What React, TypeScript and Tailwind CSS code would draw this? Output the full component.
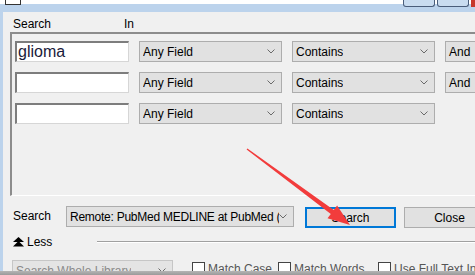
import React from "react";

function Chevron() {
  return (
    <svg width="8" height="5" viewBox="0 0 8 5" className="shrink-0">
      <path d="M0.5 0.5 L4 4 L7.5 0.5" stroke="#6a6a6a" strokeWidth="1" fill="none" />
    </svg>
  );
}

function Select({ label, w, disabled, tight }: { label: string; w: string; disabled?: boolean; tight?: boolean }) {
  return (
    <div
      className={`${w} h-[21px] shrink-0 flex items-center justify-between pl-[3px] pr-[6px] border ${
        disabled ? "bg-[#e4e4e4] border-[#c6c6c6] text-[#8a8a8a]" : "bg-[#e1e1e1] border-[#adadad] text-black"
      }`}
    >
      <span className={`leading-[14px] whitespace-nowrap overflow-hidden ${tight ? "tracking-[-0.25px]" : ""}`}>{label}</span>
      <Chevron />
    </div>
  );
}

function AndSelect() {
  return (
    <div className="w-[50px] h-[21px] shrink-0 flex items-center pl-[3px] border border-[#adadad] bg-[#e1e1e1]">
      <span className="leading-[14px]">And</span>
    </div>
  );
}

function Input({ value }: { value?: string }) {
  return (
    <div className="w-[114px] h-[21px] shrink-0 bg-white border-t-2 border-l-2 border-r border-b border-t-[#7d7d7d] border-l-[#7d7d7d] border-r-[#d6d6d6] border-b-[#d6d6d6] flex items-center pl-[1px]">
      {value && (
        <span className="font-['Liberation_Sans',Arial,sans-serif] text-[16px] leading-[18px] text-[#1a1a3a]">{value}</span>
      )}
    </div>
  );
}

function Check({ label, w }: { label: string; w: string }) {
  return (
    <div className={`${w} shrink-0 flex items-start gap-[3px]`}>
      <div className="w-[13px] h-[13px] bg-white border border-[#444] shrink-0" />
      <span className="leading-[14px] text-[#555] whitespace-nowrap">{label}</span>
    </div>
  );
}

export default function App() {
  return (
    <div className="relative w-[475px] h-[275px] overflow-hidden font-['Liberation_Sans_Narrow','Liberation_Sans',Arial,sans-serif] text-[12px] text-black bg-[#f0f0f0]">
      {/* title strip */}
      <div className="h-[12px] flex items-start bg-[linear-gradient(to_bottom,#ffffff_0px,#ffffff_4px,#bcd3ec_4px,#bcd3ec_12px)]">
        <div className="ml-[5px] w-[16px] h-[5px] border-l border-r border-b border-[#333]" />
        <div className="flex-1" />
        <div className="w-[32px] h-[7px] border border-t-0 border-[#4a5d7a] rounded-b-[3px] bg-[#c9dcf0]" />
        <div className="ml-[2px] w-[32px] h-[7px] border border-t-0 border-[#4a5d7a] rounded-b-[3px] bg-[#c9dcf0]" />
        <div className="ml-[2px] w-[4px] h-[7px] bg-[#c7372b]" />
      </div>

      <div className="flex h-[259px]">
        <div className="w-[3px] bg-[#bcd3ec] shrink-0" />
        <div className="flex-1 flex flex-col overflow-hidden bg-[#f0f0f0]">
          {/* headers */}
          <div className="h-[20px] pt-[5px] flex leading-[14px] shrink-0">
            <span className="ml-[10px] w-[111px] shrink-0">Search</span>
            <span className="shrink-0">In</span>
          </div>

          {/* group box */}
          <div className="ml-[7px] h-[164px] shrink-0 border-t-2 border-l-2 border-b border-t-[#8c8c8c] border-l-[#8c8c8c] border-b-white pt-[7px] pl-[3px] flex flex-col gap-[10px]">
            <div className="flex gap-[10px] h-[21px]">
              <Input value="glioma" />
              <Select label="Any Field" w="w-[143px]" />
              <Select label="Contains" w="w-[143px]" />
              <AndSelect />
            </div>
            <div className="flex gap-[10px] h-[21px]">
              <Input />
              <Select label="Any Field" w="w-[143px]" />
              <Select label="Contains" w="w-[143px]" />
              <AndSelect />
            </div>
            <div className="flex gap-[10px] h-[21px]">
              <Input />
              <Select label="Any Field" w="w-[143px]" />
              <Select label="Contains" w="w-[143px]" />
            </div>
          </div>

          {/* search row */}
          <div className="mt-[10px] h-[22px] flex items-start shrink-0">
            <span className="ml-[10px] w-[53px] shrink-0 mt-[3px] leading-[14px]">Search</span>
            <Select label="Remote: PubMed MEDLINE at PubMed (NLM)" w="w-[228px]" tight />
            <div className="ml-[11px] mt-[1px] w-[91px] h-[21px] shrink-0 border-2 border-[#0078d7] bg-[#e1e1e1] flex items-center justify-center leading-[14px]">
              Search
            </div>
            <div className="ml-[8px] mt-[1px] w-[91px] h-[21px] shrink-0 border border-[#adadad] bg-[#e1e1e1] flex items-center justify-center leading-[14px]">
              Close
            </div>
          </div>

          {/* less row */}
          <div className="mt-[8px] h-[12px] flex items-center shrink-0">
            <svg width="11" height="10" viewBox="0 0 11 10" className="ml-[10px] shrink-0">
              <polygon points="5.5,0 0,5 11,5" fill="#000" />
              <polygon points="5.5,4 0,9.5 11,9.5" fill="#000" />
            </svg>
            <span className="ml-[3px] leading-[14px] shrink-0">Less</span>
            <div className="ml-[45px] flex-1 h-[2px] border-t border-t-[#a0a0a0] border-b border-b-white" />
          </div>

          {/* bottom row */}
          <div className="mt-[12px] flex items-start shrink-0">
            <div className="ml-[9px] shrink-0">
              <Select label="Search Whole Library" w="w-[161px]" disabled />
            </div>
            <div className="ml-[19px] mt-[2px] flex shrink-0">
              <Check label="Match Case" w="w-[86px]" />
              <Check label="Match Words" w="w-[100px]" />
              <Check label="Use Full Text Index" w="w-[120px]" />
            </div>
          </div>
        </div>
      </div>

      <div className="h-[4px] bg-[linear-gradient(to_bottom,#b4b4b4,#9a9a9a)]" />

      {/* red annotation arrow */}
      <svg className="absolute left-0 top-0 pointer-events-none" width="475" height="275" viewBox="0 0 475 275">
        <polygon
          points="246.6,149.6 330.8,213.9 327.5,218.3 350,225 337.1,205.5 333.8,209.9 247.4,148.4"
          fill="#f23c3c"
        />
      </svg>
    </div>
  );
}
